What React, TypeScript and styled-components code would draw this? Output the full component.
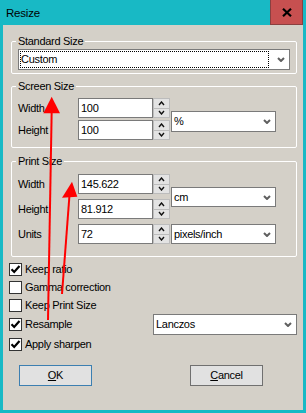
import React from 'react';
import styled, { createGlobalStyle } from 'styled-components';

const Global = createGlobalStyle`
  html, body { margin: 0; padding: 0; background: #D4D0C8; }
  body { font-family: "Liberation Sans", Arial, sans-serif; font-size: 11px; color: #000; }
  * { box-sizing: border-box; }
`;

const Window = styled.div`
  position: relative;
  width: 306px;
  height: 413px;
  background: #18B9C5;
  padding: 0 3px 3px 3px;
  display: flex;
  flex-direction: column;
`;

const TitleBar = styled.div`
  flex: none;
  height: 25px;
  display: flex;
  align-items: center;
  justify-content: space-between;
`;

const Title = styled.span`
  padding-left: 3px;
  padding-top: 1px;
  font-size: 11.5px;
  letter-spacing: -0.2px;
  color: #000;
`;

const CloseButton = styled.div`
  width: 33px;
  height: 25px;
  background: #C75050;
  border: 1px solid #8a4040;
  border-top: none;
  display: flex;
  align-items: center;
  justify-content: center;
`;

const Body = styled.div`
  flex: 1;
  background: #D4D0C8;
  padding: 10px 6px 0 6px;
  display: flex;
  flex-direction: column;
  letter-spacing: -0.3px;
`;

const Group = styled.fieldset<{ $pt: number; $pb: number; $mt: number }>`
  margin: ${p => p.$mt}px 0 0 2px;
  border: 1px solid #ffffff;
  border-radius: 2px;
  padding: ${p => p.$pt}px 6px ${p => p.$pb}px 6px;
  min-width: 0;
`;

const Legend = styled.legend`
  padding: 0 2px;
  margin-left: -2px;
  line-height: 13px;
  font-size: 11px;
`;

const FieldGrid = styled.div<{ $rows: number; $rowGap: number }>`
  display: grid;
  grid-template-columns: 60px 75px 17px 106px;
  grid-template-rows: repeat(${p => p.$rows}, 20px);
  row-gap: ${p => p.$rowGap}px;
  align-items: center;
`;

const FieldLabel = styled.span<{ $row: number }>`
  grid-column: 1;
  grid-row: ${p => p.$row};
  line-height: 13px;
`;

const TextBox = styled.div<{ $row: number }>`
  grid-column: 2;
  grid-row: ${p => p.$row};
  height: 20px;
  background: #fff;
  border: 1px solid #7A7A7A;
  padding: 0 2px;
  display: flex;
  align-items: center;
  line-height: 13px;
`;

const Spin = styled.div<{ $row: number }>`
  grid-column: 3;
  grid-row: ${p => p.$row};
  height: 20px;
  display: flex;
  flex-direction: column;
`;

const SpinHalf = styled.div`
  flex: 1;
  background: #E3E3E3;
  border: 1px solid #BCBCBC;
  display: flex;
  align-items: center;
  justify-content: center;
  & + & { border-top: none; }
`;

const Combo = styled.div<{ $width: number; $height: number }>`
  width: ${p => p.$width}px;
  height: ${p => p.$height}px;
  background: #fff;
  border: 1px solid #7A7A7A;
  display: flex;
  align-items: stretch;
  flex: none;
`;

const ComboValue = styled.div<{ $focused?: boolean }>`
  flex: 1;
  margin: 1px;
  border: 1px ${p => (p.$focused ? 'dotted #000' : 'solid transparent')};
  display: flex;
  align-items: center;
  line-height: 13px;
`;

const ComboArrow = styled.div`
  width: 19px;
  padding-left: 3px;
  display: flex;
  align-items: center;
  justify-content: center;
`;

const GridCombo = styled.div<{ $row: string; $mt: number }>`
  grid-column: 4;
  grid-row: ${p => p.$row};
  align-self: start;
  margin-top: ${p => p.$mt}px;
  margin-left: 1px;
`;

const Checks = styled.div`
  margin-top: 3px;
  display: flex;
  flex-direction: column;
`;

const CheckRow = styled.div`
  min-height: 18px;
  display: flex;
  align-items: center;
  justify-content: space-between;
`;

const CheckLabel = styled.label`
  display: flex;
  align-items: center;
  gap: 3px;
  line-height: 13px;
`;

const Box = styled.span`
  width: 13px;
  height: 13px;
  background: #fff;
  border: 1px solid #333;
  display: flex;
  align-items: center;
  justify-content: center;
`;

const ButtonRow = styled.div`
  margin-top: 12px;
  padding: 0 34px 0 10px;
  display: flex;
  justify-content: space-between;
`;

const Button = styled.div<{ $default?: boolean }>`
  width: 73px;
  height: 21px;
  background: #E1E1E1;
  border: 1px solid ${p => (p.$default ? '#3C7FB1' : '#707070')};
  display: flex;
  align-items: center;
  justify-content: center;
  line-height: 13px;
`;

const Overlay = styled.svg`
  position: absolute;
  left: 0;
  top: 0;
  pointer-events: none;
`;

const Chevron = ({ dir = 'down', color = '#5F5F5F', w = 8, h = 5, sw = 2 }: { dir?: 'up' | 'down'; color?: string; w?: number; h?: number; sw?: number }) => (
  <svg width={w} height={h} viewBox={`0 0 ${w} ${h}`}>
    <path
      d={dir === 'down' ? `M1 1 L${w / 2} ${h - 1} L${w - 1} 1` : `M1 ${h - 1} L${w / 2} 1 L${w - 1} ${h - 1}`}
      fill="none"
      stroke={color}
      strokeWidth={sw}
    />
  </svg>
);

const ComboBox = ({ value, width, height = 21, focused }: { value: string; width: number; height?: number; focused?: boolean }) => (
  <Combo $width={width} $height={height}>
    <ComboValue $focused={focused}>{value}</ComboValue>
    <ComboArrow>
      <Chevron />
    </ComboArrow>
  </Combo>
);

const SpinButtons = ({ row }: { row: number }) => (
  <Spin $row={row}>
    <SpinHalf>
      <Chevron dir="up" color="#111" w={7} h={5} sw={1.4} />
    </SpinHalf>
    <SpinHalf>
      <Chevron dir="down" color="#111" w={7} h={5} sw={1.4} />
    </SpinHalf>
  </Spin>
);

const Field = ({ label, value, row }: { label: string; value: string; row: number }) => (
  <>
    <FieldLabel $row={row}>{label}</FieldLabel>
    <TextBox $row={row}>{value}</TextBox>
    <SpinButtons row={row} />
  </>
);

const Check = ({ label, checked }: { label: string; checked: boolean }) => (
  <CheckLabel>
    <Box>
      {checked && (
        <svg width="11" height="11" viewBox="0 0 11 11">
          <path d="M1.5 5.2 L4.2 8 L9.5 2" fill="none" stroke="#000" strokeWidth="2.2" />
        </svg>
      )}
    </Box>
    <span>{label}</span>
  </CheckLabel>
);

export default function App() {
  return (
    <>
      <Global />
      <Window>
        <TitleBar>
          <Title>Resize</Title>
          <CloseButton>
            <svg width="10" height="9" viewBox="0 0 10 9">
              <path d="M1 0.8 L9 8.2 M9 0.8 L1 8.2" stroke="#000" strokeWidth="2.2" />
            </svg>
          </CloseButton>
        </TitleBar>
        <Body>
          <Group $mt={0} $pt={1} $pb={3}>
            <Legend>Standard Size</Legend>
            <ComboBox value="Custom" width={272} focused />
          </Group>

          <Group $mt={6} $pt={5} $pb={7}>
            <Legend>Screen Size</Legend>
            <FieldGrid $rows={2} $rowGap={2}>
              <Field label="Width" value="100" row={1} />
              <Field label="Height" value="100" row={2} />
              <GridCombo $row="1 / span 2" $mt={13}>
                <ComboBox value="%" width={105} />
              </GridCombo>
            </FieldGrid>
          </Group>

          <Group $mt={7} $pt={6} $pb={12}>
            <Legend>Print Size</Legend>
            <FieldGrid $rows={3} $rowGap={5}>
              <Field label="Width" value="145.622" row={1} />
              <Field label="Height" value="81.912" row={2} />
              <Field label="Units" value="72" row={3} />
              <GridCombo $row="1 / span 2" $mt={13}>
                <ComboBox value="cm" width={105} height={20} />
              </GridCombo>
              <GridCombo $row="3" $mt={0}>
                <ComboBox value="pixels/inch" width={105} height={20} />
              </GridCombo>
            </FieldGrid>
          </Group>

          <Checks>
            <CheckRow>
              <Check label="Keep ratio" checked />
            </CheckRow>
            <CheckRow>
              <Check label="Gamma correction" checked={false} />
            </CheckRow>
            <CheckRow>
              <Check label="Keep Print Size" checked={false} />
            </CheckRow>
            <CheckRow>
              <Check label="Resample" checked />
              <ComboBox value="Lanczos" width={144} />
            </CheckRow>
            <CheckRow>
              <Check label="Apply sharpen" checked />
            </CheckRow>
          </Checks>

          <ButtonRow>
            <Button $default>
              <span><u>O</u>K</span>
            </Button>
            <Button>
              <span><u>C</u>ancel</span>
            </Button>
          </ButtonRow>
        </Body>

        <Overlay width="306" height="413" viewBox="0 0 306 413">
          <g fill="#FF0000" stroke="#FF0000">
            <line x1="48" y1="320" x2="51.7" y2="110" strokeWidth="2" />
            <polygon points="51.7,96.7 43.3,113.3 60,113.3" strokeWidth="0" />
            <line x1="62" y1="294" x2="69.5" y2="195" strokeWidth="2" />
            <polygon points="72,181.7 62,197.7 77.3,196.7" strokeWidth="0" />
          </g>
        </Overlay>
      </Window>
    </>
  );
}
